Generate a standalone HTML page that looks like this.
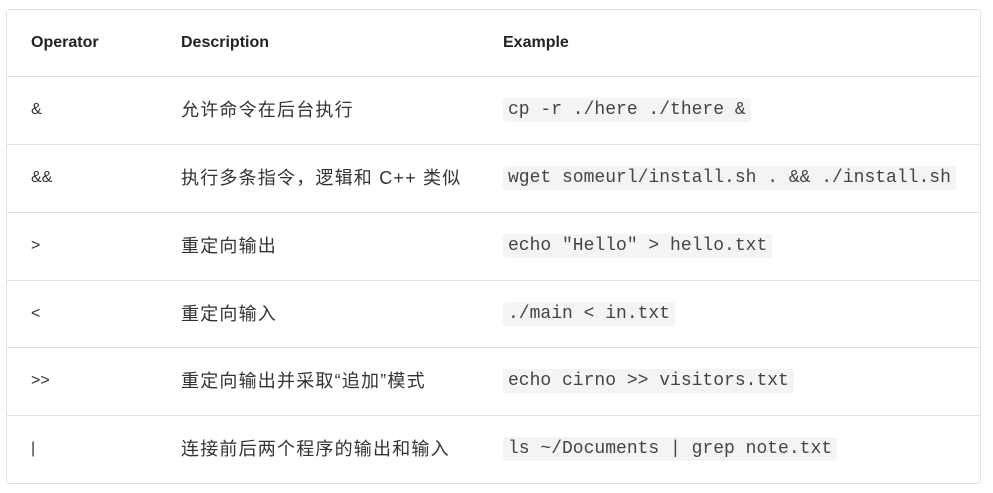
<!DOCTYPE html>
<html><head><meta charset="utf-8"><style>
body{margin:0;background:#fff;font-family:"Liberation Sans","Noto Sans CJK SC",sans-serif;color:#333;}
.t{position:absolute;left:6px;top:9px;width:973px;height:473px;border:1px solid #e2e2e2;border-radius:3px;}
.r{position:absolute;left:0;width:973px;border-top:1px solid #e2e2e2;}
.c{position:absolute;font-size:16px;white-space:nowrap;}
.z{font-size:18px;font-family:"Liberation Sans","Noto Sans CJK SC",sans-serif;letter-spacing:1.2px;color:#333;}
.h{font-weight:bold;color:#222;}
code{position:absolute;left:496px;font-family:"Liberation Mono",monospace;font-size:18px;background:#f4f4f4;padding:2px 5px;border-radius:3px;color:#444;white-space:pre;line-height:20px;}
</style></head><body>
<div class="t">
<div class="c h" style="left:24px;top:24px">Operator</div>
<div class="c h" style="left:174px;top:24px">Description</div>
<div class="c h" style="left:496px;top:24px">Example</div>

<div class="r" style="top:66px"></div>
<div class="c" style="left:24px;top:91px">&amp;</div>
<div class="c z" style="left:174px;top:86px">允许命令在后台执行</div>
<code style="top:88px">cp -r ./here ./there &amp;</code>

<div class="r" style="top:134px"></div>
<div class="c" style="left:24px;top:159px">&amp;&amp;</div>
<div class="c z" style="left:174px;top:154px">执行多条指令，逻辑和 C++ 类似</div>
<code style="top:156px">wget someurl/install.sh . &amp;&amp; ./install.sh</code>

<div class="r" style="top:202px"></div>
<div class="c" style="left:24px;top:227px">&gt;</div>
<div class="c z" style="left:174px;top:222px">重定向输出</div>
<code style="top:224px">echo "Hello" &gt; hello.txt</code>

<div class="r" style="top:270px"></div>
<div class="c" style="left:24px;top:295px">&lt;</div>
<div class="c z" style="left:174px;top:290px">重定向输入</div>
<code style="top:292px">./main &lt; in.txt</code>

<div class="r" style="top:337px"></div>
<div class="c" style="left:24px;top:362px">&gt;&gt;</div>
<div class="c z" style="left:174px;top:357px">重定向输出并采取“追加”模式</div>
<code style="top:359px">echo cirno &gt;&gt; visitors.txt</code>

<div class="r" style="top:405px"></div>
<div class="c" style="left:24px;top:430px">|</div>
<div class="c z" style="left:174px;top:425px">连接前后两个程序的输出和输入</div>
<code style="top:427px">ls ~/Documents | grep note.txt</code>
</div>
</body></html>
